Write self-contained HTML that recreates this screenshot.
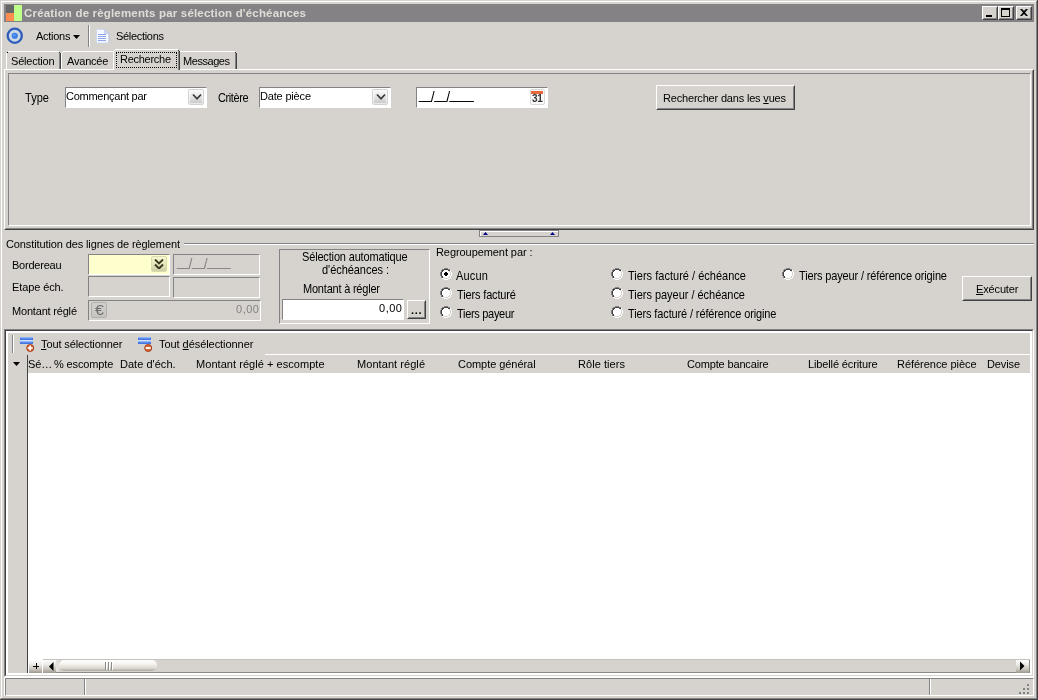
<!DOCTYPE html>
<html lang="fr"><head><meta charset="utf-8"><title>Création de règlements par sélection d'échéances</title>
<style>
html,body{margin:0;padding:0;}
body{width:1038px;height:700px;position:relative;overflow:hidden;background:#D6D3CE;font:11px "Liberation Sans",sans-serif;color:#000;}
div{position:absolute;}
.t{position:absolute;white-space:pre;line-height:13px;height:13px;font:11px "Liberation Sans",sans-serif;line-height:13px;}
.sl{font-size:14px;line-height:0;position:relative;top:2px;text-shadow:none;}
span{will-change:transform;}
u{text-decoration:underline;text-underline-offset:1px;}
</style></head><body>
<div style="left:0px;top:0px;width:1038px;height:700px;background:#D6D3CE;"></div>
<div style="left:0px;top:0px;width:1037px;height:699px;border-left:1px solid #D6D3CE;border-top:1px solid #D6D3CE;box-sizing:border-box;"></div>
<div style="left:1px;top:1px;width:1035px;height:697px;border-left:1px solid #FFFFFF;border-top:1px solid #FFFFFF;box-sizing:border-box;"></div>
<div style="left:1037px;top:0px;width:1px;height:700px;background:#424142;"></div>
<div style="left:0px;top:699px;width:1038px;height:1px;background:#424142;"></div>
<div style="left:1036px;top:1px;width:1px;height:698px;background:#848284;"></div>
<div style="left:1px;top:698px;width:1036px;height:1px;background:#848284;"></div>
<div style="left:4px;top:4px;width:1030px;height:18px;background:#848284;"></div>
<div style="left:6px;top:5px;width:8px;height:8px;background:#676767;"></div>
<div style="left:6px;top:13px;width:8px;height:8px;background:#FF8C50;"></div>
<div style="left:14px;top:5px;width:8px;height:16px;background:#BFFF8C;"></div>
<div style="left:982px;top:6px;width:16px;height:14px;background:#D6D3CE;box-sizing:border-box;border:1px solid;border-color:#FFFFFF #424142 #424142 #FFFFFF;"><div style="left:0;top:0;width:14px;height:12px;box-sizing:border-box;border:1px solid;border-color:#D6D3CE #848284 #848284 #D6D3CE;"></div><div style="left:3px;top:8px;width:6px;height:2px;background:#000"></div></div>
<div style="left:998px;top:6px;width:16px;height:14px;background:#D6D3CE;box-sizing:border-box;border:1px solid;border-color:#FFFFFF #424142 #424142 #FFFFFF;"><div style="left:0;top:0;width:14px;height:12px;box-sizing:border-box;border:1px solid;border-color:#D6D3CE #848284 #848284 #D6D3CE;"></div><div style="left:2px;top:1px;width:9px;height:9px;box-sizing:border-box;border:1px solid #000;border-top-width:2px"></div></div>
<div style="left:1016px;top:6px;width:16px;height:14px;background:#D6D3CE;box-sizing:border-box;border:1px solid;border-color:#FFFFFF #424142 #424142 #FFFFFF;"><div style="left:0;top:0;width:14px;height:12px;box-sizing:border-box;border:1px solid;border-color:#D6D3CE #848284 #848284 #D6D3CE;"></div><svg style="position:absolute;left:3px;top:2px" width="8" height="7" viewBox="0 0 8 7"><path d="M0 0h2l2 2l2-2h2l-3 3.5l3 3.5h-2l-2-2l-2 2h-2l3-3.5z" fill="#000"/></svg></div>
<svg style="position:absolute;left:6px;top:27px" width="18" height="18" viewBox="0 0 18 18"><circle cx="8.75" cy="8.75" r="7.05" fill="#CCD8E6" stroke="#2E5EBA" stroke-width="2.3"/><circle cx="8.75" cy="8.75" r="3.1" fill="#3A7CE4"/><circle cx="8.3" cy="8.2" r="1.3" fill="#5C9CF8"/></svg>
<svg style="position:absolute;left:73px;top:35px" width="7" height="4" viewBox="0 0 7 4"><path d="M0 0h7l-3.5 4z" fill="#000"/></svg>
<div style="left:88px;top:25px;width:1px;height:22px;background:#848284;"></div>
<div style="left:89px;top:25px;width:1px;height:22px;background:#FFFFFF;"></div>
<svg style="position:absolute;left:96px;top:29px" width="14" height="15" viewBox="0 0 14 15"><path d="M2.5 1.5h8l3 3v9.5h-11z" fill="#B8C0DC"/><path d="M.5 .5h8l4 4v9.5h-12z" fill="#F6F8FF" stroke="#D0D8F0" stroke-width="1"/><path d="M8.5 .5v4h4z" fill="#D4DCF4" stroke="#C0C8E8" stroke-width=".8"/><path d="M2 5.5h8M2 7.5h8M2 9.5h8M2 11.5h8" stroke="#90A4EC" stroke-width="1"/></svg>
<div style="left:4px;top:69px;width:1030px;height:161px;box-sizing:border-box;border:1px solid;border-color:#FFFFFF #424142 #424142 #FFFFFF;"><div style="left:0;top:0;width:1028px;height:159px;box-sizing:border-box;border:1px solid;border-color:#D6D3CE #848284 #848284 #D6D3CE;"></div></div>
<div style="left:6px;top:51px;width:55px;height:18px;background:#D6D3CE;"></div><div style="left:6px;top:53px;width:1px;height:16px;background:#FFFFFF;"></div><div style="left:8px;top:51px;width:51px;height:1px;background:#FFFFFF;"></div><div style="left:7px;top:52px;width:1px;height:1px;background:#FFFFFF;"></div><div style="left:59px;top:53px;width:1px;height:16px;background:#848284;"></div><div style="left:60px;top:53px;width:1px;height:16px;background:#424142;"></div><div style="left:59px;top:52px;width:1px;height:1px;background:#424142;"></div><div style="left:7px;top:52px;width:1px;height:1px;background:#000;"></div>
<div style="left:61px;top:51px;width:55px;height:18px;background:#D6D3CE;"></div><div style="left:61px;top:53px;width:1px;height:16px;background:#FFFFFF;"></div><div style="left:63px;top:51px;width:51px;height:1px;background:#FFFFFF;"></div><div style="left:62px;top:52px;width:1px;height:1px;background:#FFFFFF;"></div><div style="left:114px;top:53px;width:1px;height:16px;background:#848284;"></div><div style="left:115px;top:53px;width:1px;height:16px;background:#424142;"></div><div style="left:114px;top:52px;width:1px;height:1px;background:#424142;"></div>
<div style="left:178px;top:51px;width:59px;height:18px;background:#D6D3CE;"></div><div style="left:178px;top:53px;width:1px;height:16px;background:#FFFFFF;"></div><div style="left:180px;top:51px;width:55px;height:1px;background:#FFFFFF;"></div><div style="left:179px;top:52px;width:1px;height:1px;background:#FFFFFF;"></div><div style="left:235px;top:53px;width:1px;height:16px;background:#848284;"></div><div style="left:236px;top:53px;width:1px;height:16px;background:#424142;"></div><div style="left:235px;top:52px;width:1px;height:1px;background:#424142;"></div>
<div style="left:113px;top:49px;width:67px;height:21px;background:#D6D3CE;"></div><div style="left:113px;top:51px;width:1px;height:19px;background:#FFFFFF;"></div><div style="left:115px;top:49px;width:63px;height:1px;background:#FFFFFF;"></div><div style="left:114px;top:50px;width:1px;height:1px;background:#FFFFFF;"></div><div style="left:178px;top:51px;width:1px;height:19px;background:#848284;"></div><div style="left:179px;top:51px;width:1px;height:19px;background:#424142;"></div><div style="left:178px;top:50px;width:1px;height:1px;background:#424142;"></div>
<div style="left:116px;top:52px;width:61px;height:16px;box-sizing:border-box;border:1px dotted #000;"></div>
<div style="left:8px;top:73px;width:1023px;height:153px;box-sizing:border-box;border:1px solid;border-color:#848284 #FFFFFF #FFFFFF #848284;"></div>
<div style="left:65px;top:87px;width:142px;height:21px;background:#fff;box-sizing:border-box;border:1px solid;border-color:#848284 #FFFFFF #FFFFFF #848284;"></div>
<div style="left:188px;top:89px;width:16px;height:16px;box-sizing:border-box;border:1px solid #D2D2D2;border-radius:2px;background:linear-gradient(#FAFAFA,#E8E8E8 45%,#C6C6C6);box-shadow:inset 0 0 0 1px rgba(255,255,255,.6);"><svg style="position:absolute;left:2.5px;top:3px" width="10" height="8" viewBox="0 0 10 8"><path d="M1 1.5L5 5.8L9 1.5" fill="none" stroke="#383838" stroke-width="1.7"/></svg></div>
<div style="left:259px;top:87px;width:132px;height:21px;background:#fff;box-sizing:border-box;border:1px solid;border-color:#848284 #FFFFFF #FFFFFF #848284;"></div>
<div style="left:372px;top:89px;width:16px;height:16px;box-sizing:border-box;border:1px solid #D2D2D2;border-radius:2px;background:linear-gradient(#FAFAFA,#E8E8E8 45%,#C6C6C6);box-shadow:inset 0 0 0 1px rgba(255,255,255,.6);"><svg style="position:absolute;left:2.5px;top:3px" width="10" height="8" viewBox="0 0 10 8"><path d="M1 1.5L5 5.8L9 1.5" fill="none" stroke="#383838" stroke-width="1.7"/></svg></div>
<div style="left:416px;top:87px;width:132px;height:21px;background:#fff;box-sizing:border-box;border:1px solid;border-color:#848284 #FFFFFF #FFFFFF #848284;"></div>
<div style="left:530px;top:89px;width:15px;height:16px;box-sizing:border-box;border:1px solid #DADADA;border-radius:2px;background:#FAFAFA;"><div style="left:0px;top:1px;width:12px;height:3px;background:#E8683A"></div><span style="position:absolute;left:1px;top:4px;font:bold 10px 'Liberation Sans',sans-serif;line-height:10px;color:#333;letter-spacing:-0.3px">31</span></div>
<div style="left:656px;top:85px;width:139px;height:25px;background:#D6D3CE;box-sizing:border-box;border:1px solid;border-color:#FFFFFF #424142 #424142 #FFFFFF;"><div style="left:0;top:0;width:137px;height:23px;box-sizing:border-box;border:1px solid;border-color:#D6D3CE #848284 #848284 #D6D3CE;"></div></div>
<div style="left:479px;top:230px;width:80px;height:7px;box-sizing:border-box;border:1px solid #848284;background:#D6D3CE;"><div style="left:0;top:0;width:78px;height:1px;background:#FFFFFF"></div><div style="left:0;top:0;width:1px;height:5px;background:#FFFFFF"></div><svg style="position:absolute;left:3px;top:1px" width="5" height="3" viewBox="0 0 5 3"><path d="M0 3h5l-2.5-3z" fill="#000080"/></svg><svg style="position:absolute;left:70px;top:1px" width="5" height="3" viewBox="0 0 5 3"><path d="M0 3h5l-2.5-3z" fill="#000080"/></svg></div>
<div style="left:184px;top:243px;width:850px;height:1px;background:#848284;"></div>
<div style="left:184px;top:244px;width:850px;height:1px;background:#FFFFFF;"></div>
<div style="left:88px;top:254px;width:82px;height:21px;background:#FFFFCE;box-sizing:border-box;border:1px solid;border-color:#848284 #FFFFFF #FFFFFF #848284;"></div>
<div style="left:151px;top:256px;width:16px;height:16px;box-sizing:border-box;border:1px solid #DADAB0;border-radius:2px;background:linear-gradient(#F6F6CE,#E6E6BC 50%,#CECEA6);"><svg style="position:absolute;left:2px;top:2px" width="10" height="10" viewBox="0 0 10 10"><path d="M1 .5L5 4.5L9 .5M1 5.5L5 9.5L9 5.5" fill="none" stroke="#383820" stroke-width="1.9"/></svg></div>
<div style="left:173px;top:254px;width:87px;height:21px;background:#D6D3CE;box-sizing:border-box;border:1px solid;border-color:#848284 #FFFFFF #FFFFFF #848284;"></div>
<div style="left:88px;top:276px;width:82px;height:21px;background:#D6D3CE;box-sizing:border-box;border:1px solid;border-color:#848284 #FFFFFF #FFFFFF #848284;"></div>
<div style="left:173px;top:277px;width:87px;height:21px;background:#D6D3CE;box-sizing:border-box;border:1px solid;border-color:#848284 #FFFFFF #FFFFFF #848284;"></div>
<div style="left:88px;top:300px;width:173px;height:21px;background:#D6D3CE;box-sizing:border-box;border:1px solid;border-color:#848284 #FFFFFF #FFFFFF #848284;"></div>
<div style="left:91px;top:302px;width:16px;height:16px;box-sizing:border-box;border:1px solid #B2B0AC;border-radius:2px;background:linear-gradient(#D2D0CC,#C6C4C0);"><span style="position:absolute;left:3px;top:0px;font:14px 'Liberation Sans',sans-serif;line-height:14px;color:#6C6C6C;transform:scaleX(1.15);transform-origin:0 0">€</span></div>
<div style="left:279px;top:249px;width:151px;height:75px;box-sizing:border-box;border:1px solid;border-color:#848284 #FFFFFF #FFFFFF #848284;"></div>
<div style="left:282px;top:299px;width:122px;height:21px;background:#fff;box-sizing:border-box;border:1px solid;border-color:#848284 #FFFFFF #FFFFFF #848284;"></div>
<div style="left:407px;top:300px;width:19px;height:19px;background:#D6D3CE;box-sizing:border-box;border:1px solid;border-color:#FFFFFF #424142 #424142 #FFFFFF;"><div style="left:0;top:0;width:17px;height:17px;box-sizing:border-box;border:1px solid;border-color:#D6D3CE #848284 #848284 #D6D3CE;"></div></div>
<svg style="position:absolute;left:440px;top:268px" width="12" height="12" viewBox="0 0 12 12" shape-rendering="crispEdges"><rect x="4" y="0" width="4" height="1" fill="#848284"/><rect x="2" y="1" width="2" height="1" fill="#848284"/><rect x="4" y="1" width="4" height="1" fill="#424142"/><rect x="8" y="1" width="2" height="1" fill="#848284"/><rect x="1" y="2" width="1" height="1" fill="#848284"/><rect x="2" y="2" width="2" height="1" fill="#424142"/><rect x="4" y="2" width="4" height="1" fill="#fff"/><rect x="8" y="2" width="2" height="1" fill="#424142"/><rect x="10" y="2" width="1" height="1" fill="#fff"/><rect x="1" y="3" width="1" height="1" fill="#848284"/><rect x="2" y="3" width="1" height="1" fill="#424142"/><rect x="3" y="3" width="6" height="1" fill="#fff"/><rect x="9" y="3" width="1" height="1" fill="#D6D3CE"/><rect x="10" y="3" width="1" height="1" fill="#fff"/><rect x="0" y="4" width="1" height="1" fill="#848284"/><rect x="1" y="4" width="1" height="1" fill="#424142"/><rect x="2" y="4" width="8" height="1" fill="#fff"/><rect x="10" y="4" width="1" height="1" fill="#D6D3CE"/><rect x="11" y="4" width="1" height="1" fill="#fff"/><rect x="0" y="5" width="1" height="1" fill="#848284"/><rect x="1" y="5" width="1" height="1" fill="#424142"/><rect x="2" y="5" width="8" height="1" fill="#fff"/><rect x="10" y="5" width="1" height="1" fill="#D6D3CE"/><rect x="11" y="5" width="1" height="1" fill="#fff"/><rect x="0" y="6" width="1" height="1" fill="#848284"/><rect x="1" y="6" width="1" height="1" fill="#424142"/><rect x="2" y="6" width="8" height="1" fill="#fff"/><rect x="10" y="6" width="1" height="1" fill="#D6D3CE"/><rect x="11" y="6" width="1" height="1" fill="#fff"/><rect x="0" y="7" width="1" height="1" fill="#848284"/><rect x="1" y="7" width="1" height="1" fill="#424142"/><rect x="2" y="7" width="8" height="1" fill="#fff"/><rect x="10" y="7" width="1" height="1" fill="#D6D3CE"/><rect x="11" y="7" width="1" height="1" fill="#fff"/><rect x="1" y="8" width="1" height="1" fill="#848284"/><rect x="2" y="8" width="1" height="1" fill="#424142"/><rect x="3" y="8" width="6" height="1" fill="#fff"/><rect x="9" y="8" width="1" height="1" fill="#D6D3CE"/><rect x="10" y="8" width="1" height="1" fill="#fff"/><rect x="1" y="9" width="1" height="1" fill="#848284"/><rect x="2" y="9" width="1" height="1" fill="#424142"/><rect x="3" y="9" width="1" height="1" fill="#D6D3CE"/><rect x="4" y="9" width="4" height="1" fill="#fff"/><rect x="8" y="9" width="2" height="1" fill="#D6D3CE"/><rect x="10" y="9" width="1" height="1" fill="#fff"/><rect x="2" y="10" width="2" height="1" fill="#fff"/><rect x="4" y="10" width="4" height="1" fill="#D6D3CE"/><rect x="8" y="10" width="2" height="1" fill="#fff"/><rect x="4" y="11" width="4" height="1" fill="#fff"/><rect x="5" y="4" width="2" height="4" fill="#000"/><rect x="4" y="5" width="4" height="2" fill="#000"/></svg>
<svg style="position:absolute;left:440px;top:287px" width="12" height="12" viewBox="0 0 12 12" shape-rendering="crispEdges"><rect x="4" y="0" width="4" height="1" fill="#848284"/><rect x="2" y="1" width="2" height="1" fill="#848284"/><rect x="4" y="1" width="4" height="1" fill="#424142"/><rect x="8" y="1" width="2" height="1" fill="#848284"/><rect x="1" y="2" width="1" height="1" fill="#848284"/><rect x="2" y="2" width="2" height="1" fill="#424142"/><rect x="4" y="2" width="4" height="1" fill="#fff"/><rect x="8" y="2" width="2" height="1" fill="#424142"/><rect x="10" y="2" width="1" height="1" fill="#fff"/><rect x="1" y="3" width="1" height="1" fill="#848284"/><rect x="2" y="3" width="1" height="1" fill="#424142"/><rect x="3" y="3" width="6" height="1" fill="#fff"/><rect x="9" y="3" width="1" height="1" fill="#D6D3CE"/><rect x="10" y="3" width="1" height="1" fill="#fff"/><rect x="0" y="4" width="1" height="1" fill="#848284"/><rect x="1" y="4" width="1" height="1" fill="#424142"/><rect x="2" y="4" width="8" height="1" fill="#fff"/><rect x="10" y="4" width="1" height="1" fill="#D6D3CE"/><rect x="11" y="4" width="1" height="1" fill="#fff"/><rect x="0" y="5" width="1" height="1" fill="#848284"/><rect x="1" y="5" width="1" height="1" fill="#424142"/><rect x="2" y="5" width="8" height="1" fill="#fff"/><rect x="10" y="5" width="1" height="1" fill="#D6D3CE"/><rect x="11" y="5" width="1" height="1" fill="#fff"/><rect x="0" y="6" width="1" height="1" fill="#848284"/><rect x="1" y="6" width="1" height="1" fill="#424142"/><rect x="2" y="6" width="8" height="1" fill="#fff"/><rect x="10" y="6" width="1" height="1" fill="#D6D3CE"/><rect x="11" y="6" width="1" height="1" fill="#fff"/><rect x="0" y="7" width="1" height="1" fill="#848284"/><rect x="1" y="7" width="1" height="1" fill="#424142"/><rect x="2" y="7" width="8" height="1" fill="#fff"/><rect x="10" y="7" width="1" height="1" fill="#D6D3CE"/><rect x="11" y="7" width="1" height="1" fill="#fff"/><rect x="1" y="8" width="1" height="1" fill="#848284"/><rect x="2" y="8" width="1" height="1" fill="#424142"/><rect x="3" y="8" width="6" height="1" fill="#fff"/><rect x="9" y="8" width="1" height="1" fill="#D6D3CE"/><rect x="10" y="8" width="1" height="1" fill="#fff"/><rect x="1" y="9" width="1" height="1" fill="#848284"/><rect x="2" y="9" width="1" height="1" fill="#424142"/><rect x="3" y="9" width="1" height="1" fill="#D6D3CE"/><rect x="4" y="9" width="4" height="1" fill="#fff"/><rect x="8" y="9" width="2" height="1" fill="#D6D3CE"/><rect x="10" y="9" width="1" height="1" fill="#fff"/><rect x="2" y="10" width="2" height="1" fill="#fff"/><rect x="4" y="10" width="4" height="1" fill="#D6D3CE"/><rect x="8" y="10" width="2" height="1" fill="#fff"/><rect x="4" y="11" width="4" height="1" fill="#fff"/></svg>
<svg style="position:absolute;left:440px;top:306px" width="12" height="12" viewBox="0 0 12 12" shape-rendering="crispEdges"><rect x="4" y="0" width="4" height="1" fill="#848284"/><rect x="2" y="1" width="2" height="1" fill="#848284"/><rect x="4" y="1" width="4" height="1" fill="#424142"/><rect x="8" y="1" width="2" height="1" fill="#848284"/><rect x="1" y="2" width="1" height="1" fill="#848284"/><rect x="2" y="2" width="2" height="1" fill="#424142"/><rect x="4" y="2" width="4" height="1" fill="#fff"/><rect x="8" y="2" width="2" height="1" fill="#424142"/><rect x="10" y="2" width="1" height="1" fill="#fff"/><rect x="1" y="3" width="1" height="1" fill="#848284"/><rect x="2" y="3" width="1" height="1" fill="#424142"/><rect x="3" y="3" width="6" height="1" fill="#fff"/><rect x="9" y="3" width="1" height="1" fill="#D6D3CE"/><rect x="10" y="3" width="1" height="1" fill="#fff"/><rect x="0" y="4" width="1" height="1" fill="#848284"/><rect x="1" y="4" width="1" height="1" fill="#424142"/><rect x="2" y="4" width="8" height="1" fill="#fff"/><rect x="10" y="4" width="1" height="1" fill="#D6D3CE"/><rect x="11" y="4" width="1" height="1" fill="#fff"/><rect x="0" y="5" width="1" height="1" fill="#848284"/><rect x="1" y="5" width="1" height="1" fill="#424142"/><rect x="2" y="5" width="8" height="1" fill="#fff"/><rect x="10" y="5" width="1" height="1" fill="#D6D3CE"/><rect x="11" y="5" width="1" height="1" fill="#fff"/><rect x="0" y="6" width="1" height="1" fill="#848284"/><rect x="1" y="6" width="1" height="1" fill="#424142"/><rect x="2" y="6" width="8" height="1" fill="#fff"/><rect x="10" y="6" width="1" height="1" fill="#D6D3CE"/><rect x="11" y="6" width="1" height="1" fill="#fff"/><rect x="0" y="7" width="1" height="1" fill="#848284"/><rect x="1" y="7" width="1" height="1" fill="#424142"/><rect x="2" y="7" width="8" height="1" fill="#fff"/><rect x="10" y="7" width="1" height="1" fill="#D6D3CE"/><rect x="11" y="7" width="1" height="1" fill="#fff"/><rect x="1" y="8" width="1" height="1" fill="#848284"/><rect x="2" y="8" width="1" height="1" fill="#424142"/><rect x="3" y="8" width="6" height="1" fill="#fff"/><rect x="9" y="8" width="1" height="1" fill="#D6D3CE"/><rect x="10" y="8" width="1" height="1" fill="#fff"/><rect x="1" y="9" width="1" height="1" fill="#848284"/><rect x="2" y="9" width="1" height="1" fill="#424142"/><rect x="3" y="9" width="1" height="1" fill="#D6D3CE"/><rect x="4" y="9" width="4" height="1" fill="#fff"/><rect x="8" y="9" width="2" height="1" fill="#D6D3CE"/><rect x="10" y="9" width="1" height="1" fill="#fff"/><rect x="2" y="10" width="2" height="1" fill="#fff"/><rect x="4" y="10" width="4" height="1" fill="#D6D3CE"/><rect x="8" y="10" width="2" height="1" fill="#fff"/><rect x="4" y="11" width="4" height="1" fill="#fff"/></svg>
<svg style="position:absolute;left:611px;top:268px" width="12" height="12" viewBox="0 0 12 12" shape-rendering="crispEdges"><rect x="4" y="0" width="4" height="1" fill="#848284"/><rect x="2" y="1" width="2" height="1" fill="#848284"/><rect x="4" y="1" width="4" height="1" fill="#424142"/><rect x="8" y="1" width="2" height="1" fill="#848284"/><rect x="1" y="2" width="1" height="1" fill="#848284"/><rect x="2" y="2" width="2" height="1" fill="#424142"/><rect x="4" y="2" width="4" height="1" fill="#fff"/><rect x="8" y="2" width="2" height="1" fill="#424142"/><rect x="10" y="2" width="1" height="1" fill="#fff"/><rect x="1" y="3" width="1" height="1" fill="#848284"/><rect x="2" y="3" width="1" height="1" fill="#424142"/><rect x="3" y="3" width="6" height="1" fill="#fff"/><rect x="9" y="3" width="1" height="1" fill="#D6D3CE"/><rect x="10" y="3" width="1" height="1" fill="#fff"/><rect x="0" y="4" width="1" height="1" fill="#848284"/><rect x="1" y="4" width="1" height="1" fill="#424142"/><rect x="2" y="4" width="8" height="1" fill="#fff"/><rect x="10" y="4" width="1" height="1" fill="#D6D3CE"/><rect x="11" y="4" width="1" height="1" fill="#fff"/><rect x="0" y="5" width="1" height="1" fill="#848284"/><rect x="1" y="5" width="1" height="1" fill="#424142"/><rect x="2" y="5" width="8" height="1" fill="#fff"/><rect x="10" y="5" width="1" height="1" fill="#D6D3CE"/><rect x="11" y="5" width="1" height="1" fill="#fff"/><rect x="0" y="6" width="1" height="1" fill="#848284"/><rect x="1" y="6" width="1" height="1" fill="#424142"/><rect x="2" y="6" width="8" height="1" fill="#fff"/><rect x="10" y="6" width="1" height="1" fill="#D6D3CE"/><rect x="11" y="6" width="1" height="1" fill="#fff"/><rect x="0" y="7" width="1" height="1" fill="#848284"/><rect x="1" y="7" width="1" height="1" fill="#424142"/><rect x="2" y="7" width="8" height="1" fill="#fff"/><rect x="10" y="7" width="1" height="1" fill="#D6D3CE"/><rect x="11" y="7" width="1" height="1" fill="#fff"/><rect x="1" y="8" width="1" height="1" fill="#848284"/><rect x="2" y="8" width="1" height="1" fill="#424142"/><rect x="3" y="8" width="6" height="1" fill="#fff"/><rect x="9" y="8" width="1" height="1" fill="#D6D3CE"/><rect x="10" y="8" width="1" height="1" fill="#fff"/><rect x="1" y="9" width="1" height="1" fill="#848284"/><rect x="2" y="9" width="1" height="1" fill="#424142"/><rect x="3" y="9" width="1" height="1" fill="#D6D3CE"/><rect x="4" y="9" width="4" height="1" fill="#fff"/><rect x="8" y="9" width="2" height="1" fill="#D6D3CE"/><rect x="10" y="9" width="1" height="1" fill="#fff"/><rect x="2" y="10" width="2" height="1" fill="#fff"/><rect x="4" y="10" width="4" height="1" fill="#D6D3CE"/><rect x="8" y="10" width="2" height="1" fill="#fff"/><rect x="4" y="11" width="4" height="1" fill="#fff"/></svg>
<svg style="position:absolute;left:611px;top:287px" width="12" height="12" viewBox="0 0 12 12" shape-rendering="crispEdges"><rect x="4" y="0" width="4" height="1" fill="#848284"/><rect x="2" y="1" width="2" height="1" fill="#848284"/><rect x="4" y="1" width="4" height="1" fill="#424142"/><rect x="8" y="1" width="2" height="1" fill="#848284"/><rect x="1" y="2" width="1" height="1" fill="#848284"/><rect x="2" y="2" width="2" height="1" fill="#424142"/><rect x="4" y="2" width="4" height="1" fill="#fff"/><rect x="8" y="2" width="2" height="1" fill="#424142"/><rect x="10" y="2" width="1" height="1" fill="#fff"/><rect x="1" y="3" width="1" height="1" fill="#848284"/><rect x="2" y="3" width="1" height="1" fill="#424142"/><rect x="3" y="3" width="6" height="1" fill="#fff"/><rect x="9" y="3" width="1" height="1" fill="#D6D3CE"/><rect x="10" y="3" width="1" height="1" fill="#fff"/><rect x="0" y="4" width="1" height="1" fill="#848284"/><rect x="1" y="4" width="1" height="1" fill="#424142"/><rect x="2" y="4" width="8" height="1" fill="#fff"/><rect x="10" y="4" width="1" height="1" fill="#D6D3CE"/><rect x="11" y="4" width="1" height="1" fill="#fff"/><rect x="0" y="5" width="1" height="1" fill="#848284"/><rect x="1" y="5" width="1" height="1" fill="#424142"/><rect x="2" y="5" width="8" height="1" fill="#fff"/><rect x="10" y="5" width="1" height="1" fill="#D6D3CE"/><rect x="11" y="5" width="1" height="1" fill="#fff"/><rect x="0" y="6" width="1" height="1" fill="#848284"/><rect x="1" y="6" width="1" height="1" fill="#424142"/><rect x="2" y="6" width="8" height="1" fill="#fff"/><rect x="10" y="6" width="1" height="1" fill="#D6D3CE"/><rect x="11" y="6" width="1" height="1" fill="#fff"/><rect x="0" y="7" width="1" height="1" fill="#848284"/><rect x="1" y="7" width="1" height="1" fill="#424142"/><rect x="2" y="7" width="8" height="1" fill="#fff"/><rect x="10" y="7" width="1" height="1" fill="#D6D3CE"/><rect x="11" y="7" width="1" height="1" fill="#fff"/><rect x="1" y="8" width="1" height="1" fill="#848284"/><rect x="2" y="8" width="1" height="1" fill="#424142"/><rect x="3" y="8" width="6" height="1" fill="#fff"/><rect x="9" y="8" width="1" height="1" fill="#D6D3CE"/><rect x="10" y="8" width="1" height="1" fill="#fff"/><rect x="1" y="9" width="1" height="1" fill="#848284"/><rect x="2" y="9" width="1" height="1" fill="#424142"/><rect x="3" y="9" width="1" height="1" fill="#D6D3CE"/><rect x="4" y="9" width="4" height="1" fill="#fff"/><rect x="8" y="9" width="2" height="1" fill="#D6D3CE"/><rect x="10" y="9" width="1" height="1" fill="#fff"/><rect x="2" y="10" width="2" height="1" fill="#fff"/><rect x="4" y="10" width="4" height="1" fill="#D6D3CE"/><rect x="8" y="10" width="2" height="1" fill="#fff"/><rect x="4" y="11" width="4" height="1" fill="#fff"/></svg>
<svg style="position:absolute;left:611px;top:306px" width="12" height="12" viewBox="0 0 12 12" shape-rendering="crispEdges"><rect x="4" y="0" width="4" height="1" fill="#848284"/><rect x="2" y="1" width="2" height="1" fill="#848284"/><rect x="4" y="1" width="4" height="1" fill="#424142"/><rect x="8" y="1" width="2" height="1" fill="#848284"/><rect x="1" y="2" width="1" height="1" fill="#848284"/><rect x="2" y="2" width="2" height="1" fill="#424142"/><rect x="4" y="2" width="4" height="1" fill="#fff"/><rect x="8" y="2" width="2" height="1" fill="#424142"/><rect x="10" y="2" width="1" height="1" fill="#fff"/><rect x="1" y="3" width="1" height="1" fill="#848284"/><rect x="2" y="3" width="1" height="1" fill="#424142"/><rect x="3" y="3" width="6" height="1" fill="#fff"/><rect x="9" y="3" width="1" height="1" fill="#D6D3CE"/><rect x="10" y="3" width="1" height="1" fill="#fff"/><rect x="0" y="4" width="1" height="1" fill="#848284"/><rect x="1" y="4" width="1" height="1" fill="#424142"/><rect x="2" y="4" width="8" height="1" fill="#fff"/><rect x="10" y="4" width="1" height="1" fill="#D6D3CE"/><rect x="11" y="4" width="1" height="1" fill="#fff"/><rect x="0" y="5" width="1" height="1" fill="#848284"/><rect x="1" y="5" width="1" height="1" fill="#424142"/><rect x="2" y="5" width="8" height="1" fill="#fff"/><rect x="10" y="5" width="1" height="1" fill="#D6D3CE"/><rect x="11" y="5" width="1" height="1" fill="#fff"/><rect x="0" y="6" width="1" height="1" fill="#848284"/><rect x="1" y="6" width="1" height="1" fill="#424142"/><rect x="2" y="6" width="8" height="1" fill="#fff"/><rect x="10" y="6" width="1" height="1" fill="#D6D3CE"/><rect x="11" y="6" width="1" height="1" fill="#fff"/><rect x="0" y="7" width="1" height="1" fill="#848284"/><rect x="1" y="7" width="1" height="1" fill="#424142"/><rect x="2" y="7" width="8" height="1" fill="#fff"/><rect x="10" y="7" width="1" height="1" fill="#D6D3CE"/><rect x="11" y="7" width="1" height="1" fill="#fff"/><rect x="1" y="8" width="1" height="1" fill="#848284"/><rect x="2" y="8" width="1" height="1" fill="#424142"/><rect x="3" y="8" width="6" height="1" fill="#fff"/><rect x="9" y="8" width="1" height="1" fill="#D6D3CE"/><rect x="10" y="8" width="1" height="1" fill="#fff"/><rect x="1" y="9" width="1" height="1" fill="#848284"/><rect x="2" y="9" width="1" height="1" fill="#424142"/><rect x="3" y="9" width="1" height="1" fill="#D6D3CE"/><rect x="4" y="9" width="4" height="1" fill="#fff"/><rect x="8" y="9" width="2" height="1" fill="#D6D3CE"/><rect x="10" y="9" width="1" height="1" fill="#fff"/><rect x="2" y="10" width="2" height="1" fill="#fff"/><rect x="4" y="10" width="4" height="1" fill="#D6D3CE"/><rect x="8" y="10" width="2" height="1" fill="#fff"/><rect x="4" y="11" width="4" height="1" fill="#fff"/></svg>
<svg style="position:absolute;left:782px;top:268px" width="12" height="12" viewBox="0 0 12 12" shape-rendering="crispEdges"><rect x="4" y="0" width="4" height="1" fill="#848284"/><rect x="2" y="1" width="2" height="1" fill="#848284"/><rect x="4" y="1" width="4" height="1" fill="#424142"/><rect x="8" y="1" width="2" height="1" fill="#848284"/><rect x="1" y="2" width="1" height="1" fill="#848284"/><rect x="2" y="2" width="2" height="1" fill="#424142"/><rect x="4" y="2" width="4" height="1" fill="#fff"/><rect x="8" y="2" width="2" height="1" fill="#424142"/><rect x="10" y="2" width="1" height="1" fill="#fff"/><rect x="1" y="3" width="1" height="1" fill="#848284"/><rect x="2" y="3" width="1" height="1" fill="#424142"/><rect x="3" y="3" width="6" height="1" fill="#fff"/><rect x="9" y="3" width="1" height="1" fill="#D6D3CE"/><rect x="10" y="3" width="1" height="1" fill="#fff"/><rect x="0" y="4" width="1" height="1" fill="#848284"/><rect x="1" y="4" width="1" height="1" fill="#424142"/><rect x="2" y="4" width="8" height="1" fill="#fff"/><rect x="10" y="4" width="1" height="1" fill="#D6D3CE"/><rect x="11" y="4" width="1" height="1" fill="#fff"/><rect x="0" y="5" width="1" height="1" fill="#848284"/><rect x="1" y="5" width="1" height="1" fill="#424142"/><rect x="2" y="5" width="8" height="1" fill="#fff"/><rect x="10" y="5" width="1" height="1" fill="#D6D3CE"/><rect x="11" y="5" width="1" height="1" fill="#fff"/><rect x="0" y="6" width="1" height="1" fill="#848284"/><rect x="1" y="6" width="1" height="1" fill="#424142"/><rect x="2" y="6" width="8" height="1" fill="#fff"/><rect x="10" y="6" width="1" height="1" fill="#D6D3CE"/><rect x="11" y="6" width="1" height="1" fill="#fff"/><rect x="0" y="7" width="1" height="1" fill="#848284"/><rect x="1" y="7" width="1" height="1" fill="#424142"/><rect x="2" y="7" width="8" height="1" fill="#fff"/><rect x="10" y="7" width="1" height="1" fill="#D6D3CE"/><rect x="11" y="7" width="1" height="1" fill="#fff"/><rect x="1" y="8" width="1" height="1" fill="#848284"/><rect x="2" y="8" width="1" height="1" fill="#424142"/><rect x="3" y="8" width="6" height="1" fill="#fff"/><rect x="9" y="8" width="1" height="1" fill="#D6D3CE"/><rect x="10" y="8" width="1" height="1" fill="#fff"/><rect x="1" y="9" width="1" height="1" fill="#848284"/><rect x="2" y="9" width="1" height="1" fill="#424142"/><rect x="3" y="9" width="1" height="1" fill="#D6D3CE"/><rect x="4" y="9" width="4" height="1" fill="#fff"/><rect x="8" y="9" width="2" height="1" fill="#D6D3CE"/><rect x="10" y="9" width="1" height="1" fill="#fff"/><rect x="2" y="10" width="2" height="1" fill="#fff"/><rect x="4" y="10" width="4" height="1" fill="#D6D3CE"/><rect x="8" y="10" width="2" height="1" fill="#fff"/><rect x="4" y="11" width="4" height="1" fill="#fff"/></svg>
<div style="left:962px;top:276px;width:70px;height:25px;background:#D6D3CE;box-sizing:border-box;border:1px solid;border-color:#FFFFFF #424142 #424142 #FFFFFF;"><div style="left:0;top:0;width:68px;height:23px;box-sizing:border-box;border:1px solid;border-color:#D6D3CE #848284 #848284 #D6D3CE;"></div></div>
<div style="left:4px;top:329px;width:1030px;height:348px;box-sizing:border-box;border:1px solid;border-color:#848284 #FFFFFF #FFFFFF #848284;background:#fff;"><div style="left:0;top:0;width:1028px;height:346px;box-sizing:border-box;border:1px solid;border-color:#424142 #D6D3CE #D6D3CE #424142;"></div></div>
<div style="left:8px;top:333px;width:1022px;height:21px;background:#D6D3CE;"></div>
<div style="left:8px;top:354px;width:257px;height:1px;background:#D6D3CE;"></div>
<div style="left:8px;top:355px;width:1022px;height:18px;background:#D6D3CE;"></div>
<div style="left:8px;top:373px;width:19px;height:300px;background:#D6D3CE;"></div>
<div style="left:27px;top:355px;width:1px;height:318px;background:#424142;"></div>
<div style="left:12px;top:335px;width:1px;height:18px;background:#848284;"></div>
<div style="left:13px;top:335px;width:1px;height:18px;background:#FFFFFF;"></div>
<svg style="position:absolute;left:20px;top:336px" width="16" height="17" viewBox="0 0 16 17"><rect x="0" y="1" width="13" height="3" fill="#4474E0"/><rect x="0" y="1" width="13" height="1" fill="#8CB4F8"/><rect x="1" y="2" width="11" height="1" fill="#5C8CEC"/><rect x="0" y="4" width="13" height="1" fill="#D4E2FC"/><rect x="0" y="5" width="13" height="3" fill="#4474E0"/><rect x="0" y="5" width="13" height="1" fill="#8CB4F8"/><rect x="1" y="6" width="11" height="1" fill="#5C8CEC"/><circle cx="10.2" cy="12" r="3.5" fill="#D8683C" stroke="#A83C18" stroke-width="1"/><path d="M10.2 9.4v5.2M7.6 12h5.2" stroke="#fff" stroke-width="1.7"/></svg>
<svg style="position:absolute;left:138px;top:336px" width="16" height="17" viewBox="0 0 16 17"><rect x="0" y="1" width="13" height="3" fill="#4474E0"/><rect x="0" y="1" width="13" height="1" fill="#8CB4F8"/><rect x="1" y="2" width="11" height="1" fill="#5C8CEC"/><rect x="0" y="4" width="13" height="1" fill="#D4E2FC"/><rect x="0" y="5" width="13" height="3" fill="#4474E0"/><rect x="0" y="5" width="13" height="1" fill="#8CB4F8"/><rect x="1" y="6" width="11" height="1" fill="#5C8CEC"/><circle cx="10.2" cy="12" r="3.5" fill="#D8683C" stroke="#A83C18" stroke-width="1"/><rect x="7.7" y="11" width="5" height="2" fill="#FFF4E0"/></svg>
<svg style="position:absolute;left:13px;top:362px" width="7" height="4" viewBox="0 0 7 4"><path d="M0 0h7l-3.5 4z" fill="#000"/></svg>
<div style="left:29px;top:660px;width:13px;height:13px;background:linear-gradient(#FFFFFF 0%,#ECEAE6 35%,#C4C0B8 75%,#9C9890 100%);"><div style="left:4px;top:6px;width:6px;height:1px;background:#000"></div><div style="left:7px;top:3px;width:1px;height:6px;background:#000"></div></div>
<div style="left:43px;top:659px;width:987px;height:14px;background:#D6D3CE;border-top:1px solid #C4C2BC;border-bottom:1px solid #8C8A84;box-sizing:border-box;"></div>
<div style="left:43px;top:660px;width:13px;height:13px;background:linear-gradient(#FFFFFF 0%,#ECEAE6 35%,#C4C0B8 75%,#9C9890 100%);"><svg style="position:absolute;left:6px;top:2px" width="5" height="9" viewBox="0 0 5 9"><path d="M4.5 0v9l-4.5-4.5z" fill="#000"/></svg></div>
<div style="left:56px;top:660px;width:3px;height:12px;background:#E4E2DE;"></div>
<div style="left:1016px;top:660px;width:14px;height:13px;background:linear-gradient(#FFFFFF 0%,#ECEAE6 35%,#C4C0B8 75%,#9C9890 100%);border-right:1px solid #8C8A84;box-sizing:border-box;"><svg style="position:absolute;left:4px;top:1px" width="5" height="10" viewBox="0 0 5 10"><path d="M0 .5v9l4.5-4.5z" fill="#000"/></svg></div>
<div style="left:59px;top:660px;width:98px;height:11px;border-radius:5px;background:linear-gradient(#FFFFFF 0%,#F6F4F0 35%,#DCD8D0 75%,#ACA8A0 100%);"><div style="left:46px;top:2px;width:1px;height:8px;background:#8C8A86"></div><div style="left:47px;top:2px;width:1px;height:8px;background:#fff"></div><div style="left:49px;top:2px;width:1px;height:8px;background:#8C8A86"></div><div style="left:50px;top:2px;width:1px;height:8px;background:#fff"></div><div style="left:52px;top:2px;width:1px;height:8px;background:#8C8A86"></div><div style="left:53px;top:2px;width:1px;height:8px;background:#fff"></div></div>
<div style="left:4px;top:677px;width:1030px;height:1px;background:#FFFFFF;"></div>
<div style="left:4px;top:677px;width:1px;height:19px;background:#FFFFFF;"></div>
<div style="left:5px;top:678px;width:1029px;height:18px;box-sizing:border-box;border:1px solid;border-color:#848284 #FFFFFF #FFFFFF #848284;"></div>
<div style="left:84px;top:679px;width:1px;height:16px;background:#848284;"></div>
<div style="left:85px;top:679px;width:1px;height:16px;background:#FFFFFF;"></div>
<div style="left:929px;top:679px;width:1px;height:16px;background:#848284;"></div>
<div style="left:930px;top:679px;width:1px;height:16px;background:#FFFFFF;"></div>
<div style="left:1027px;top:684px;width:2px;height:2px;background:#848284;"></div><div style="left:1028px;top:685px;width:2px;height:2px;background:#FFFFFF;z-index:-1;"></div><div style="left:1023px;top:688px;width:2px;height:2px;background:#848284;"></div><div style="left:1024px;top:689px;width:2px;height:2px;background:#FFFFFF;z-index:-1;"></div><div style="left:1027px;top:688px;width:2px;height:2px;background:#848284;"></div><div style="left:1028px;top:689px;width:2px;height:2px;background:#FFFFFF;z-index:-1;"></div><div style="left:1019px;top:692px;width:2px;height:2px;background:#848284;"></div><div style="left:1020px;top:693px;width:2px;height:2px;background:#FFFFFF;z-index:-1;"></div><div style="left:1023px;top:692px;width:2px;height:2px;background:#848284;"></div><div style="left:1024px;top:693px;width:2px;height:2px;background:#FFFFFF;z-index:-1;"></div><div style="left:1027px;top:692px;width:2px;height:2px;background:#848284;"></div><div style="left:1028px;top:693px;width:2px;height:2px;background:#FFFFFF;z-index:-1;"></div>
<span class="t" style="left:24px;top:6px;letter-spacing:0.176px;font:bold 11.5px 'Liberation Sans',sans-serif;line-height:14px;color:#E0DDD8;">Création de règlements par sélection d'échéances</span>
<span class="t" style="left:36px;top:30px;letter-spacing:-0.280px;">Actions</span>
<span class="t" style="left:116px;top:30px;letter-spacing:-0.307px;">Sélections</span>
<span class="t" style="left:11px;top:55px;letter-spacing:-0.208px;">Sélection</span>
<span class="t" style="left:67px;top:55px;letter-spacing:-0.202px;">Avancée</span>
<span class="t" style="left:120px;top:53px;letter-spacing:-0.275px;">Recherche</span>
<span class="t" style="left:183px;top:55px;letter-spacing:-0.449px;">Messages</span>
<span class="t" style="left:25px;top:92px;letter-spacing:0.047px;transform:scaleY(1.13);transform-origin:0 10px;">Type</span>
<span class="t" style="left:66px;top:90px;letter-spacing:-0.260px;">Commençant par</span>
<span class="t" style="left:218px;top:92px;letter-spacing:-0.403px;transform:scaleY(1.13);transform-origin:0 10px;">Critère</span>
<span class="t" style="left:260px;top:90px;letter-spacing:-0.177px;">Date pièce</span>
<span class="t" style="left:419px;top:90px;letter-spacing:-0.241px;text-shadow:0 0 0 #000,0 0 0 #000;">__<span class="sl">/</span>__<span class="sl">/</span>____</span>
<span class="t" style="left:663px;top:92px;letter-spacing:-0.183px;">Rechercher dans les <u>v</u>ues</span>
<span class="t" style="left:6px;top:238px;letter-spacing:-0.113px;">Constitution des lignes de règlement</span>
<span class="t" style="left:12px;top:259px;letter-spacing:-0.222px;">Bordereau</span>
<span class="t" style="left:12px;top:281px;letter-spacing:-0.110px;">Etape éch.</span>
<span class="t" style="left:12px;top:305px;letter-spacing:-0.189px;">Montant réglé</span>
<span class="t" style="left:177px;top:257px;letter-spacing:-0.352px;color:#848284;text-shadow:0 0 0 #848284;">__<span class="sl">/</span>__<span class="sl">/</span>____</span>
<span class="t" style="left:236px;top:303px;letter-spacing:0.526px;color:#848284;">0,00</span>
<span class="t" style="left:302px;top:251px;letter-spacing:-0.163px;transform:scaleY(1.13);transform-origin:0 10px;">Sélection automatique</span>
<span class="t" style="left:322px;top:264px;letter-spacing:-0.046px;transform:scaleY(1.13);transform-origin:0 10px;">d'échéances :</span>
<span class="t" style="left:303px;top:283px;letter-spacing:-0.207px;transform:scaleY(1.13);transform-origin:0 10px;">Montant à régler</span>
<span class="t" style="left:379px;top:302px;letter-spacing:0.526px;">0,00</span>
<span class="t" style="left:411px;top:304px;letter-spacing:0.714px;font-weight:bold;">...</span>
<span class="t" style="left:436px;top:246px;letter-spacing:-0.073px;">Regroupement par :</span>
<span class="t" style="left:456px;top:270px;letter-spacing:0.199px;transform:scaleY(1.13);transform-origin:0 10px;">Aucun</span>
<span class="t" style="left:457px;top:289px;letter-spacing:-0.145px;transform:scaleY(1.13);transform-origin:0 10px;">Tiers facturé</span>
<span class="t" style="left:457px;top:308px;letter-spacing:-0.303px;transform:scaleY(1.13);transform-origin:0 10px;">Tiers payeur</span>
<span class="t" style="left:628px;top:270px;letter-spacing:0.017px;transform:scaleY(1.13);transform-origin:0 10px;">Tiers facturé / échéance</span>
<span class="t" style="left:628px;top:289px;letter-spacing:-0.028px;transform:scaleY(1.13);transform-origin:0 10px;">Tiers payeur / échéance</span>
<span class="t" style="left:628px;top:308px;letter-spacing:-0.126px;transform:scaleY(1.13);transform-origin:0 10px;">Tiers facturé / référence origine</span>
<span class="t" style="left:799px;top:270px;letter-spacing:-0.144px;transform:scaleY(1.13);transform-origin:0 10px;">Tiers payeur / référence origine</span>
<span class="t" style="left:976px;top:283px;letter-spacing:-0.146px;"><u>E</u>xécuter</span>
<span class="t" style="left:41px;top:338px;letter-spacing:-0.111px;"><u>T</u>out sélectionner</span>
<span class="t" style="left:159px;top:338px;letter-spacing:-0.057px;">Tout <u>d</u>ésélectionner</span>
<span class="t" style="left:28px;top:358px;letter-spacing:-0.134px;">Sé…</span>
<span class="t" style="left:54px;top:358px;letter-spacing:-0.126px;">% escompte</span>
<span class="t" style="left:120px;top:358px;letter-spacing:0.029px;">Date d'éch.</span>
<span class="t" style="left:196px;top:358px;letter-spacing:0.048px;">Montant réglé + escompte</span>
<span class="t" style="left:357px;top:358px;letter-spacing:0.061px;">Montant réglé</span>
<span class="t" style="left:458px;top:358px;letter-spacing:-0.052px;">Compte général</span>
<span class="t" style="left:578px;top:358px;letter-spacing:0.059px;">Rôle tiers</span>
<span class="t" style="left:687px;top:358px;letter-spacing:-0.156px;">Compte bancaire</span>
<span class="t" style="left:808px;top:358px;letter-spacing:-0.130px;">Libellé écriture</span>
<span class="t" style="left:897px;top:358px;letter-spacing:-0.036px;">Référence pièce</span>
<span class="t" style="left:987px;top:358px;letter-spacing:-0.125px;">Devise</span>
</body></html>
